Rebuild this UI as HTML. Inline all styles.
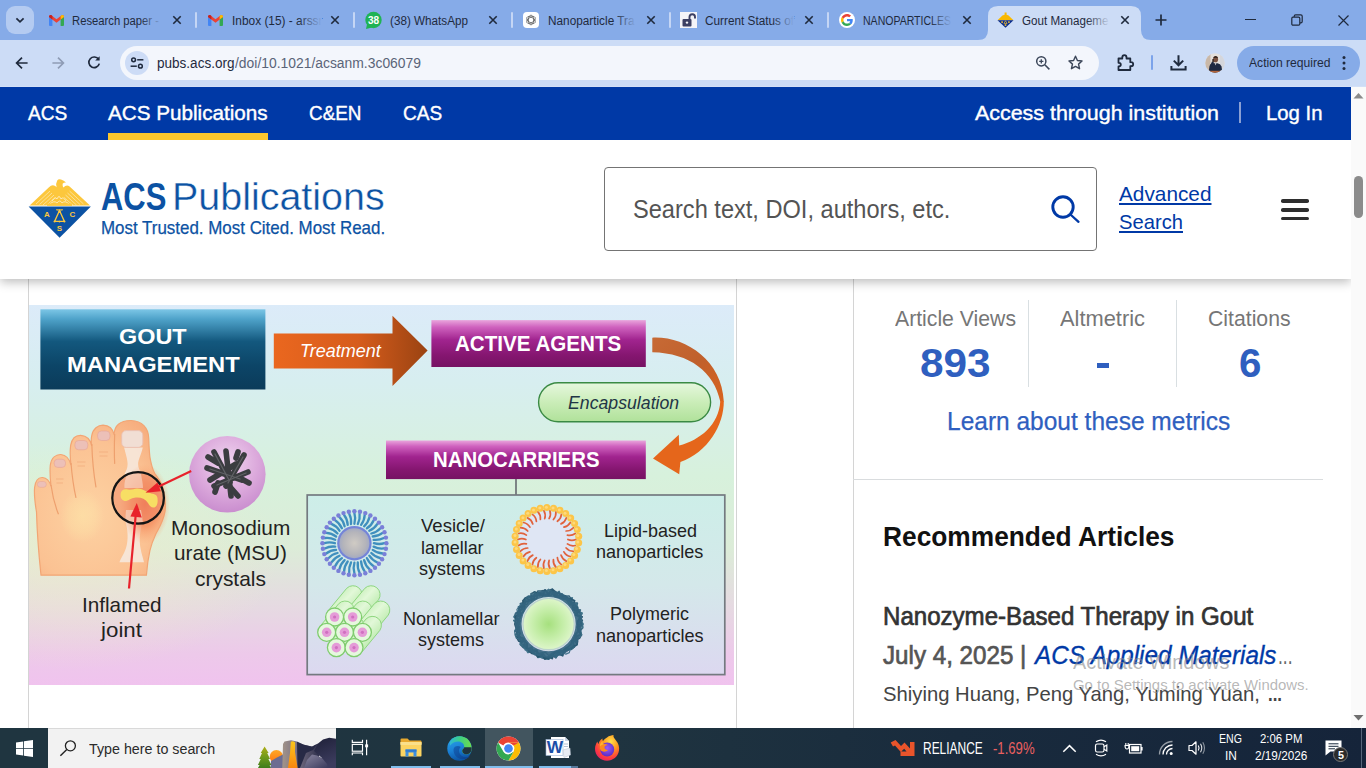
<!DOCTYPE html>
<html><head><meta charset="utf-8"><title>Gout Management</title>
<style>
html,body{margin:0;padding:0;}
body{width:1366px;height:768px;overflow:hidden;position:relative;background:#fff;font-family:"Liberation Sans",sans-serif;}
.t{position:absolute;white-space:nowrap;transform-origin:0 0;line-height:normal;}
.a{position:absolute;}
svg{position:absolute;overflow:visible;}
</style></head><body>
<div class="a" style="left:0;top:0;width:1366px;height:40px;background:#86abe8"></div><div class="a" style="left:0;top:40px;width:1366px;height:47px;background:#ccdcf6"></div><svg style="left:0;top:0" width="1366" height="41"><path d="M978 40 Q988 40 988 30 L988 16 Q988 6 998 6 L1131 6 Q1141 6 1141 16 L1141 30 Q1141 40 1151 40 Z" fill="#ccdcf6"/></svg><div class="a" style="left:6px;top:6px;width:28px;height:28px;border-radius:9px;background:#b4cbf1"></div><svg style="left:13px;top:13px" width="14" height="14" viewBox="0 0 14 14"><path d="M3.4 5.3 L7 8.9 L10.6 5.3" fill="none" stroke="#1f2a3d" stroke-width="1.7"/></svg><svg style="left:49px;top:15px" width="15" height="11" viewBox="0 0 15 11">
<path d="M0 1.6 L0 10 Q0 11 1 11 L3.4 11 L3.4 4.6 Z" fill="#4285f4"/>
<path d="M15 1.6 L15 10 Q15 11 14 11 L11.6 11 L11.6 4.6 Z" fill="#34a853"/>
<path d="M0 1.6 Q0 0 1.6 0 L2 0 L7.5 4.2 L13 0 L13.4 0 Q15 0 15 1.6 L15 2 L7.5 7.8 L0 2 Z" fill="#ea4335"/>
<path d="M0 1.5 Q0 0 1.5 0 L2.2 0 L3.4 1 L3.4 4.6 L0 2Z" fill="#c5221f"/>
<path d="M15 1.5 Q15 0 13.5 0 L12.8 0 L11.6 1 L11.6 4.6 L15 2Z" fill="#fbbc04"/>
</svg><span class="t" style="left:72.00px;top:13.95px;font-size:12px;color:#1f2a3d;transform:scaleX(0.9384);">Research paper -</span>
<div class="a" style="left:140px;top:10px;width:22px;height:20px;background:linear-gradient(90deg,rgba(134,171,232,0),rgba(134,171,232,1))"></div><svg style="left:172px;top:15px" width="10" height="10" viewBox="0 0 10 10"><path d="M1.3 1.3 L8.7 8.7 M8.7 1.3 L1.3 8.7" stroke="#1f2a3d" stroke-width="1.6" fill="none"/></svg><div class="a" style="left:195px;top:12px;width:2px;height:16px;background:#c5d6f5;border-radius:1px"></div><svg style="left:208px;top:15px" width="15" height="11" viewBox="0 0 15 11">
<path d="M0 1.6 L0 10 Q0 11 1 11 L3.4 11 L3.4 4.6 Z" fill="#4285f4"/>
<path d="M15 1.6 L15 10 Q15 11 14 11 L11.6 11 L11.6 4.6 Z" fill="#34a853"/>
<path d="M0 1.6 Q0 0 1.6 0 L2 0 L7.5 4.2 L13 0 L13.4 0 Q15 0 15 1.6 L15 2 L7.5 7.8 L0 2 Z" fill="#ea4335"/>
<path d="M0 1.5 Q0 0 1.5 0 L2.2 0 L3.4 1 L3.4 4.6 L0 2Z" fill="#c5221f"/>
<path d="M15 1.5 Q15 0 13.5 0 L12.8 0 L11.6 1 L11.6 4.6 L15 2Z" fill="#fbbc04"/>
</svg><span class="t" style="left:231.50px;top:13.95px;font-size:12px;color:#1f2a3d;transform:scaleX(0.9906);">Inbox (15) - arssr</span>
<div class="a" style="left:298px;top:10px;width:24px;height:20px;background:linear-gradient(90deg,rgba(134,171,232,0),rgba(134,171,232,1))"></div><svg style="left:330px;top:15px" width="10" height="10" viewBox="0 0 10 10"><path d="M1.3 1.3 L8.7 8.7 M8.7 1.3 L1.3 8.7" stroke="#1f2a3d" stroke-width="1.6" fill="none"/></svg><div class="a" style="left:353px;top:12px;width:2px;height:16px;background:#c5d6f5;border-radius:1px"></div><svg style="left:364px;top:11px" width="19" height="19" viewBox="0 0 19 19"><circle cx="9.5" cy="9" r="8.2" fill="#1fb355"/><path d="M2 18 L3.2 12.5 L8 16.5 Z" fill="#1fb355"/><text x="9.5" y="12.6" font-family="Liberation Sans" font-size="10" font-weight="bold" fill="#fff" text-anchor="middle">38</text></svg><span class="t" style="left:389.50px;top:13.95px;font-size:12px;color:#1f2a3d;transform:scaleX(0.9746);">(38) WhatsApp</span>
<svg style="left:488px;top:15px" width="10" height="10" viewBox="0 0 10 10"><path d="M1.3 1.3 L8.7 8.7 M8.7 1.3 L1.3 8.7" stroke="#1f2a3d" stroke-width="1.6" fill="none"/></svg><div class="a" style="left:511px;top:12px;width:2px;height:16px;background:#c5d6f5;border-radius:1px"></div><div class="a" style="left:523px;top:12px;width:16px;height:16px;border-radius:4px;background:#fff"></div><svg style="left:525px;top:14px" width="12" height="12" viewBox="0 0 12 12"><g fill="none" stroke="#555" stroke-width="0.7"><ellipse cx="6" cy="6" rx="2.6" ry="4.8"/><ellipse cx="6" cy="6" rx="2.6" ry="4.8" transform="rotate(60 6 6)"/><ellipse cx="6" cy="6" rx="2.6" ry="4.8" transform="rotate(120 6 6)"/></g></svg><span class="t" style="left:547.50px;top:13.95px;font-size:12px;color:#1f2a3d;transform:scaleX(0.9825);">Nanoparticle Tra</span>
<div class="a" style="left:614px;top:10px;width:22px;height:20px;background:linear-gradient(90deg,rgba(134,171,232,0),rgba(134,171,232,1))"></div><svg style="left:646px;top:15px" width="10" height="10" viewBox="0 0 10 10"><path d="M1.3 1.3 L8.7 8.7 M8.7 1.3 L1.3 8.7" stroke="#1f2a3d" stroke-width="1.6" fill="none"/></svg><div class="a" style="left:669px;top:12px;width:2px;height:16px;background:#c5d6f5;border-radius:1px"></div><div class="a" style="left:680px;top:12px;width:17px;height:16px;background:#f4f4f8"></div><svg style="left:681px;top:13px" width="16" height="14" viewBox="0 0 16 14"><rect x="1.5" y="6" width="9" height="7.5" rx="1" fill="#3c3f63"/><path d="M8.5 6 L8.5 4 Q8.5 1.2 11.3 1.2 Q14 1.2 14 4 L14 5.6" fill="none" stroke="#3c3f63" stroke-width="1.9"/><circle cx="6" cy="9.6" r="1.2" fill="#f4f4f8"/></svg><span class="t" style="left:705.00px;top:13.95px;font-size:12px;color:#1f2a3d;transform:scaleX(0.9812);">Current Status of</span>
<div class="a" style="left:772px;top:10px;width:22px;height:20px;background:linear-gradient(90deg,rgba(134,171,232,0),rgba(134,171,232,1))"></div><svg style="left:804px;top:15px" width="10" height="10" viewBox="0 0 10 10"><path d="M1.3 1.3 L8.7 8.7 M8.7 1.3 L1.3 8.7" stroke="#1f2a3d" stroke-width="1.6" fill="none"/></svg><div class="a" style="left:827px;top:12px;width:2px;height:16px;background:#c5d6f5;border-radius:1px"></div><div class="a" style="left:839px;top:12px;width:16px;height:16px;border-radius:8px;background:#fff"></div><svg style="left:841px;top:14px" width="12" height="12" viewBox="0 0 48 48"><path fill="#EA4335" d="M24 9.5c3.54 0 6.71 1.22 9.21 3.6l6.85-6.85C35.9 2.38 30.47 0 24 0 14.62 0 6.51 5.38 2.56 13.22l7.98 6.19C12.43 13.72 17.74 9.5 24 9.5z"/><path fill="#4285F4" d="M46.98 24.55c0-1.57-.15-3.09-.38-4.55H24v9.02h12.94c-.58 2.96-2.26 5.48-4.78 7.18l7.73 6c4.51-4.18 7.09-10.36 7.09-17.65z"/><path fill="#FBBC05" d="M10.53 28.59c-.48-1.45-.76-2.99-.76-4.59s.27-3.14.76-4.59l-7.98-6.19C.92 16.46 0 20.12 0 24c0 3.88.92 7.54 2.56 10.78l7.97-6.19z"/><path fill="#34A853" d="M24 48c6.48 0 11.93-2.13 15.89-5.81l-7.73-6c-2.15 1.45-4.92 2.3-8.16 2.3-6.26 0-11.57-4.22-13.47-9.91l-7.98 6.19C6.51 42.62 14.62 48 24 48z"/></svg><span class="t" style="left:863.00px;top:13.95px;font-size:12px;color:#1f2a3d;transform:scaleX(0.8778);">NANOPARTICLES</span>
<div class="a" style="left:930px;top:10px;width:22px;height:20px;background:linear-gradient(90deg,rgba(134,171,232,0),rgba(134,171,232,1))"></div><svg style="left:962px;top:15px" width="10" height="10" viewBox="0 0 10 10"><path d="M1.3 1.3 L8.7 8.7 M8.7 1.3 L1.3 8.7" stroke="#1f2a3d" stroke-width="1.6" fill="none"/></svg><svg style="left:997px;top:12px" width="17" height="16" viewBox="0 0 17 16"><path d="M0.5 8.2 L3.4 5.4 Q5.4 3.2 7.6 2.8 L7.6 0.6 L9.6 0.6 L9.6 2.800 Q11.600 3.200 13.600 5.400 L16.500 8.200 Z" fill="#f9b800"/><path d="M0.500 8.200 L16.500 8.200 L8.500 15.800 Z" fill="#0a2d8c"/><g fill="#f4c030"><rect x="4.300" y="9.300" width="1.600" height="1.600"/><rect x="11.100" y="9.300" width="1.600" height="1.600"/><rect x="7.700" y="12.300" width="1.600" height="1.600"/></g><path d="M8.500 8.800 L6.900 11.600 L10.100 11.600 Z" fill="none" stroke="#f4c030" stroke-width="0.700"/></svg><span class="t" style="left:1021.50px;top:13.95px;font-size:12px;color:#1f2a3d;transform:scaleX(0.9677);">Gout Manageme</span>
<div class="a" style="left:1086px;top:10px;width:24px;height:20px;background:linear-gradient(90deg,rgba(204,220,246,0),rgba(204,220,246,1))"></div><svg style="left:1120px;top:15px" width="10" height="10" viewBox="0 0 10 10"><path d="M1.3 1.3 L8.7 8.7 M8.7 1.3 L1.3 8.7" stroke="#1f2a3d" stroke-width="1.6" fill="none"/></svg><svg style="left:1154px;top:13px" width="14" height="14" viewBox="0 0 14 14"><path d="M7 1.5 V12.5 M1.5 7 H12.5" stroke="#1f2a3d" stroke-width="1.7"/></svg><div class="a" style="left:1245px;top:19px;width:11px;height:1.3px;background:#1f2a3d"></div><svg style="left:1291px;top:14px" width="12" height="12" viewBox="0 0 12 12"><rect x="0.8" y="3.2" width="8" height="8" rx="1.2" fill="none" stroke="#1f2a3d" stroke-width="1.2"/><path d="M3.2 3 V2.2 Q3.2 0.8 4.6 0.8 H9.8 Q11.2 0.8 11.2 2.2 V7.4 Q11.2 8.8 9.8 8.8 H9" fill="none" stroke="#1f2a3d" stroke-width="1.2"/></svg><svg style="left:1338px;top:14.5px" width="11" height="11" viewBox="0 0 11 11"><path d="M0.5 0.5 L10.5 10.5 M10.5 0.5 L0.5 10.5" stroke="#1f2a3d" stroke-width="1.2"/></svg><svg style="left:15px;top:56px" width="14" height="14" viewBox="0 0 14 14"><path d="M12.6 7 H2 M7 1.6 L1.6 7 L7 12.4" fill="none" stroke="#1f2a3d" stroke-width="1.7"/></svg><svg style="left:51px;top:56px" width="14" height="14" viewBox="0 0 14 14"><path d="M1.4 7 H12 M7 1.6 L12.4 7 L7 12.4" fill="none" stroke="#8f9cb5" stroke-width="1.7"/></svg><svg style="left:87px;top:55px" width="14" height="15" viewBox="0 0 14 15"><path d="M11.6 4.4 A5.3 5.3 0 1 0 12.3 8.6" fill="none" stroke="#1f2a3d" stroke-width="1.7"/><path d="M12.6 1.2 V5.6 H8.2 Z" fill="#1f2a3d"/></svg><div class="a" style="left:120px;top:46px;width:979px;height:34px;border-radius:17px;background:#f3f6fc"></div><div class="a" style="left:125px;top:51px;width:24px;height:24px;border-radius:12px;background:#cddcf6"></div><svg style="left:130px;top:56px" width="14" height="14" viewBox="0 0 14 14"><g fill="none" stroke="#1f2a3d" stroke-width="1.5"><circle cx="3.6" cy="3.8" r="1.9"/><path d="M7.2 3.8 H13.4"/><circle cx="10.4" cy="10.2" r="1.9"/><path d="M0.6 10.2 H6.8"/></g></svg><span class="t" style="left:157.00px;top:54.61px;font-size:14px;color:#1f2a3d;transform:scaleX(0.9668);">pubs.acs.org</span>
<span class="t" style="left:234.50px;top:54.61px;font-size:14px;color:#5a6478;transform:scaleX(0.9915);">/doi/10.1021/acsanm.3c06079</span>
<svg style="left:1035px;top:55px" width="16" height="16" viewBox="0 0 16 16"><g fill="none" stroke="#3b4659" stroke-width="1.5"><circle cx="6.3" cy="6.3" r="4.6"/><path d="M9.8 9.8 L14.4 14.4"/><path d="M4.2 6.3 H8.4 M6.3 4.2 V8.4" stroke-width="1.3"/></g></svg><svg style="left:1067px;top:54px" width="17" height="17" viewBox="0 0 24 24"><path d="M12 3.2 L14.7 9.2 L21.2 9.9 L16.3 14.3 L17.7 20.8 L12 17.5 L6.3 20.8 L7.7 14.3 L2.8 9.9 L9.3 9.2 Z" fill="none" stroke="#3b4659" stroke-width="2" stroke-linejoin="round"/></svg><svg style="left:1116px;top:53px" width="19" height="19" viewBox="0 0 19 19"><path d="M2.5 5.5 H6.3 V4.6 Q6.3 2.2 8.4 2.2 Q10.5 2.2 10.5 4.6 V5.5 H14.3 V9.2 H15 Q17.2 9.2 17.2 11.2 Q17.2 13.2 15 13.2 H14.3 V17 H2.5 V13.4 H3 Q4.8 13.4 4.8 11.6 Q4.8 9.8 3 9.8 H2.5 Z" fill="none" stroke="#1f2a3d" stroke-width="1.8" stroke-linejoin="round"/></svg><div class="a" style="left:1151px;top:55px;width:2px;height:15px;background:#7ba3ea;border-radius:1px"></div><svg style="left:1170px;top:54px" width="17" height="17" viewBox="0 0 17 17"><path d="M8.5 1.2 V11 M3.8 6.6 L8.5 11.3 L13.2 6.6 M1.4 12 V15.6 H15.6 V12" fill="none" stroke="#1f2a3d" stroke-width="2"/></svg><svg style="left:1205px;top:53px" width="20" height="20" viewBox="0 0 20 20"><defs><clipPath id="avc"><circle cx="10" cy="10" r="9.700"/></clipPath></defs><g clip-path="url(#avc)"><rect width="20" height="20" fill="#e4e0dc"/><rect x="0" y="0" width="5.500" height="20" fill="#c9b8a8"/><rect x="15" y="0" width="5" height="20" fill="#d4d6dc"/>
<path d="M3.500 20 L4.500 13 Q5 10.500 8 10.200 L12.500 10.200 Q15.500 10.500 16.500 13.500 L17.500 20 Z" fill="#1f2a42"/>
<path d="M5 13 L7 8.500 L9 9.500 L7.500 14 Z" fill="#1f2a42"/>
<ellipse cx="10.600" cy="6.200" rx="2.500" ry="3.100" fill="#7a5240"/><path d="M8 5.200 Q10.600 1.300 13.200 5.200 Q10.600 3.600 8 5.200Z" fill="#17120f"/><rect x="7.300" y="6" width="1.600" height="3" rx="0.500" fill="#3a2a24"/>
<path d="M9.800 10.200 L10.600 12.500 L11.400 10.200Z" fill="#e8e4e0"/><rect x="2" y="17.800" width="16" height="3" fill="#b5673e"/></g></svg><div class="a" style="left:1237px;top:46px;width:123px;height:34px;border-radius:17px;background:#86abe8"></div><span class="t" style="left:1249.00px;top:55.03px;font-size:13px;color:#1f2a3d;transform:scaleX(0.9321);">Action required</span>
<svg style="left:1342px;top:55px" width="4" height="16" viewBox="0 0 4 16"><circle cx="2" cy="2.5" r="1.5" fill="#1f2a3d"/><circle cx="2" cy="8" r="1.5" fill="#1f2a3d"/><circle cx="2" cy="13.5" r="1.5" fill="#1f2a3d"/></svg><div class="a" style="left:0;top:87px;width:1351px;height:641px;background:#fff"></div><div class="a" style="left:28px;top:278px;width:1px;height:450px;background:#d4d4d4"></div><div class="a" style="left:736px;top:278px;width:1px;height:450px;background:#d4d4d4"></div><div class="a" style="left:853px;top:278px;width:1px;height:450px;background:#d4d4d4"></div><svg style="left:0;top:0" width="760" height="700" viewBox="0 0 760 700"><defs>
<linearGradient id="fbg" x1="0" y1="0" x2="0" y2="1"><stop offset="0" stop-color="#dcebf9"/><stop offset="0.2" stop-color="#d7eef0"/><stop offset="0.45" stop-color="#d7f1dc"/><stop offset="0.64" stop-color="#dcecd8"/><stop offset="0.8" stop-color="#e6d9e2"/><stop offset="0.92" stop-color="#edc9ea"/><stop offset="1" stop-color="#f0c3ee"/></linearGradient>
<radialGradient id="fyl" cx="0.06" cy="0.66" r="0.3"><stop offset="0" stop-color="#f2ecc8" stop-opacity="0.55"/><stop offset="1" stop-color="#f4efc6" stop-opacity="0"/></radialGradient>
<linearGradient id="gbox" x1="0" y1="0" x2="0" y2="1"><stop offset="0" stop-color="#7cc6e6"/><stop offset="0.12" stop-color="#4fa3ca"/><stop offset="0.4" stop-color="#13587e"/><stop offset="0.7" stop-color="#0c4567"/><stop offset="1" stop-color="#0b3b5a"/></linearGradient>
<linearGradient id="pbox" x1="0" y1="0" x2="0" y2="1"><stop offset="0" stop-color="#e9a4dc"/><stop offset="0.15" stop-color="#cf62be"/><stop offset="0.42" stop-color="#a1248f"/><stop offset="0.75" stop-color="#851670"/><stop offset="1" stop-color="#761263"/></linearGradient>
<linearGradient id="oarr" x1="0" y1="0" x2="1" y2="0"><stop offset="0" stop-color="#ea671f"/><stop offset="0.55" stop-color="#d65c1c"/><stop offset="1" stop-color="#9a4312"/></linearGradient>
<linearGradient id="carr1" x1="0" y1="0" x2="1" y2="1"><stop offset="0" stop-color="#c76a35"/><stop offset="0.5" stop-color="#c0602c"/><stop offset="1" stop-color="#d8631f"/></linearGradient>
<linearGradient id="enc" x1="0" y1="0" x2="0" y2="1"><stop offset="0" stop-color="#e6f7de"/><stop offset="0.5" stop-color="#caedb8"/><stop offset="1" stop-color="#b0e19a"/></linearGradient>
<linearGradient id="nbox" x1="0" y1="0" x2="0" y2="1"><stop offset="0" stop-color="#cdeee8"/><stop offset="0.5" stop-color="#d4e8ea"/><stop offset="1" stop-color="#dcd8f0"/></linearGradient>
<radialGradient id="pcir" cx="0.5" cy="0.35" r="0.7"><stop offset="0" stop-color="#f0d6f0"/><stop offset="0.55" stop-color="#dcaadc"/><stop offset="1" stop-color="#c688cc"/></radialGradient>
<radialGradient id="core" cx="0.5" cy="0.5" r="0.5"><stop offset="0" stop-color="#d0cbc4"/><stop offset="0.75" stop-color="#b4b4ba"/><stop offset="1" stop-color="#a4aac2"/></radialGradient>
<radialGradient id="pgr" cx="0.5" cy="0.5" r="0.5"><stop offset="0" stop-color="#a6e07e"/><stop offset="0.6" stop-color="#c6eeaa"/><stop offset="1" stop-color="#dcf5c8"/></radialGradient>
<linearGradient id="cyl" x1="0" y1="0" x2="1" y2="1"><stop offset="0" stop-color="#a8e596"/><stop offset="0.45" stop-color="#e2f8d8"/><stop offset="1" stop-color="#9adf88"/></linearGradient>
<radialGradient id="skin" cx="0.42" cy="0.6" r="0.72"><stop offset="0" stop-color="#fdd2a2"/><stop offset="0.65" stop-color="#fbc293"/><stop offset="1" stop-color="#f6ab7c"/></radialGradient>
<radialGradient id="infl" cx="0.5" cy="0.5" r="0.5"><stop offset="0" stop-color="#ee6a48" stop-opacity="0.95"/><stop offset="0.55" stop-color="#f48a5c" stop-opacity="0.75"/><stop offset="1" stop-color="#f9a574" stop-opacity="0"/></radialGradient>
<radialGradient id="ytx" cx="0.5" cy="0.5" r="0.5"><stop offset="0" stop-color="#fde6a8" stop-opacity="0.55"/><stop offset="0.6" stop-color="#fde6a8" stop-opacity="0.3"/><stop offset="1" stop-color="#fde6a8" stop-opacity="0"/></radialGradient><clipPath id="figclip"><rect x="29" y="305" width="705" height="380"/></clipPath>
</defs><rect x="29" y="305" width="705" height="380" fill="url(#fbg)"/><rect x="29" y="305" width="705" height="380" fill="url(#fyl)"/><rect x="40.4" y="309.3" width="225" height="80.2" fill="url(#gbox)"/><path d="M273.8 333.6 L392.5 333.6 L392.5 315.7 L427.6 350.5 L392.5 386 L392.5 368.4 L273.8 368.4 Z" fill="url(#oarr)"/><rect x="431.4" y="320.1" width="214.4" height="46.9" fill="url(#pbox)"/><rect x="386" y="440.5" width="259.8" height="38.6" fill="url(#pbox)"/><path d="M652.3 337.7 C685 336 722 360 723.8 401.5 L720.3 401.5 C714 372 690 353 652.3 352.2 Z" fill="url(#carr1)"/><path d="M723.8 401 C724 425 708 452 680.4 462 L679.2 474.2 L653 458.5 L678.8 434.8 L679.2 445.6 C700 440 719 425 720.3 401 Z" fill="#e5661b"/><rect x="538.6" y="382.8" width="172" height="39" rx="19.5" fill="url(#enc)" stroke="#3a8a44" stroke-width="1.4"/><path d="M516 479 V495" stroke="#666a70" stroke-width="1.6"/><rect x="307.2" y="495" width="417.6" height="179.6" fill="url(#nbox)" stroke="#747a80" stroke-width="1.7"/><path d="M373.9 543.2 Q379.4 544.8 384.4 543.2" stroke="#3f8fbe" stroke-width="2.3" fill="none" stroke-linecap="round"/><path d="M373.6 546.6 Q378.7 549.1 383.9 548.4" stroke="#3f8fbe" stroke-width="2.3" fill="none" stroke-linecap="round"/><path d="M372.7 549.9 Q377.3 553.3 382.6 553.5" stroke="#3f8fbe" stroke-width="2.3" fill="none" stroke-linecap="round"/><path d="M371.3 553.0 Q375.3 557.1 380.4 558.2" stroke="#3f8fbe" stroke-width="2.3" fill="none" stroke-linecap="round"/><path d="M369.3 555.7 Q372.5 560.5 377.4 562.5" stroke="#3f8fbe" stroke-width="2.3" fill="none" stroke-linecap="round"/><path d="M366.9 558.1 Q369.2 563.4 373.7 566.2" stroke="#3f8fbe" stroke-width="2.3" fill="none" stroke-linecap="round"/><path d="M364.1 560.1 Q365.5 565.7 369.4 569.2" stroke="#3f8fbe" stroke-width="2.3" fill="none" stroke-linecap="round"/><path d="M361.1 561.5 Q361.4 567.2 364.7 571.4" stroke="#3f8fbe" stroke-width="2.3" fill="none" stroke-linecap="round"/><path d="M357.8 562.4 Q357.2 568.1 359.6 572.7" stroke="#3f8fbe" stroke-width="2.3" fill="none" stroke-linecap="round"/><path d="M354.4 562.7 Q352.8 568.2 354.4 573.2" stroke="#3f8fbe" stroke-width="2.3" fill="none" stroke-linecap="round"/><path d="M351.0 562.4 Q348.5 567.5 349.2 572.7" stroke="#3f8fbe" stroke-width="2.3" fill="none" stroke-linecap="round"/><path d="M347.7 561.5 Q344.3 566.1 344.1 571.4" stroke="#3f8fbe" stroke-width="2.3" fill="none" stroke-linecap="round"/><path d="M344.6 560.1 Q340.5 564.1 339.4 569.2" stroke="#3f8fbe" stroke-width="2.3" fill="none" stroke-linecap="round"/><path d="M341.9 558.1 Q337.1 561.3 335.1 566.2" stroke="#3f8fbe" stroke-width="2.3" fill="none" stroke-linecap="round"/><path d="M339.5 555.7 Q334.2 558.0 331.4 562.5" stroke="#3f8fbe" stroke-width="2.3" fill="none" stroke-linecap="round"/><path d="M337.5 553.0 Q331.9 554.3 328.4 558.2" stroke="#3f8fbe" stroke-width="2.3" fill="none" stroke-linecap="round"/><path d="M336.1 549.9 Q330.4 550.2 326.2 553.5" stroke="#3f8fbe" stroke-width="2.3" fill="none" stroke-linecap="round"/><path d="M335.2 546.6 Q329.5 546.0 324.9 548.4" stroke="#3f8fbe" stroke-width="2.3" fill="none" stroke-linecap="round"/><path d="M334.9 543.2 Q329.4 541.6 324.4 543.2" stroke="#3f8fbe" stroke-width="2.3" fill="none" stroke-linecap="round"/><path d="M335.2 539.8 Q330.1 537.3 324.9 538.0" stroke="#3f8fbe" stroke-width="2.3" fill="none" stroke-linecap="round"/><path d="M336.1 536.5 Q331.5 533.1 326.2 532.9" stroke="#3f8fbe" stroke-width="2.3" fill="none" stroke-linecap="round"/><path d="M337.5 533.5 Q333.5 529.3 328.4 528.2" stroke="#3f8fbe" stroke-width="2.3" fill="none" stroke-linecap="round"/><path d="M339.5 530.7 Q336.3 525.9 331.4 523.9" stroke="#3f8fbe" stroke-width="2.3" fill="none" stroke-linecap="round"/><path d="M341.9 528.3 Q339.6 523.0 335.1 520.2" stroke="#3f8fbe" stroke-width="2.3" fill="none" stroke-linecap="round"/><path d="M344.6 526.3 Q343.3 520.7 339.4 517.2" stroke="#3f8fbe" stroke-width="2.3" fill="none" stroke-linecap="round"/><path d="M347.7 524.9 Q347.4 519.2 344.1 515.0" stroke="#3f8fbe" stroke-width="2.3" fill="none" stroke-linecap="round"/><path d="M351.0 524.0 Q351.6 518.3 349.2 513.7" stroke="#3f8fbe" stroke-width="2.3" fill="none" stroke-linecap="round"/><path d="M354.4 523.7 Q356.0 518.2 354.4 513.2" stroke="#3f8fbe" stroke-width="2.3" fill="none" stroke-linecap="round"/><path d="M357.8 524.0 Q360.3 518.9 359.6 513.7" stroke="#3f8fbe" stroke-width="2.3" fill="none" stroke-linecap="round"/><path d="M361.1 524.9 Q364.5 520.3 364.7 515.0" stroke="#3f8fbe" stroke-width="2.3" fill="none" stroke-linecap="round"/><path d="M364.1 526.3 Q368.3 522.3 369.4 517.2" stroke="#3f8fbe" stroke-width="2.3" fill="none" stroke-linecap="round"/><path d="M366.9 528.3 Q371.7 525.1 373.7 520.2" stroke="#3f8fbe" stroke-width="2.3" fill="none" stroke-linecap="round"/><path d="M369.3 530.7 Q374.6 528.4 377.4 523.9" stroke="#3f8fbe" stroke-width="2.3" fill="none" stroke-linecap="round"/><path d="M371.3 533.5 Q376.9 532.1 380.4 528.2" stroke="#3f8fbe" stroke-width="2.3" fill="none" stroke-linecap="round"/><path d="M372.7 536.5 Q378.4 536.2 382.6 532.9" stroke="#3f8fbe" stroke-width="2.3" fill="none" stroke-linecap="round"/><path d="M373.6 539.8 Q379.3 540.4 383.9 538.0" stroke="#3f8fbe" stroke-width="2.3" fill="none" stroke-linecap="round"/><circle cx="386.4" cy="543.2" r="2.2" fill="#7a7fd8"/><circle cx="385.9" cy="548.8" r="2.2" fill="#7a7fd8"/><circle cx="384.5" cy="554.1" r="2.2" fill="#7a7fd8"/><circle cx="382.1" cy="559.2" r="2.2" fill="#7a7fd8"/><circle cx="378.9" cy="563.8" r="2.2" fill="#7a7fd8"/><circle cx="375.0" cy="567.7" r="2.2" fill="#7a7fd8"/><circle cx="370.4" cy="570.9" r="2.2" fill="#7a7fd8"/><circle cx="365.3" cy="573.3" r="2.2" fill="#7a7fd8"/><circle cx="360.0" cy="574.7" r="2.2" fill="#7a7fd8"/><circle cx="354.4" cy="575.2" r="2.2" fill="#7a7fd8"/><circle cx="348.8" cy="574.7" r="2.2" fill="#7a7fd8"/><circle cx="343.5" cy="573.3" r="2.2" fill="#7a7fd8"/><circle cx="338.4" cy="570.9" r="2.2" fill="#7a7fd8"/><circle cx="333.8" cy="567.7" r="2.2" fill="#7a7fd8"/><circle cx="329.9" cy="563.8" r="2.2" fill="#7a7fd8"/><circle cx="326.7" cy="559.2" r="2.2" fill="#7a7fd8"/><circle cx="324.3" cy="554.1" r="2.2" fill="#7a7fd8"/><circle cx="322.9" cy="548.8" r="2.2" fill="#7a7fd8"/><circle cx="322.4" cy="543.2" r="2.2" fill="#7a7fd8"/><circle cx="322.9" cy="537.6" r="2.2" fill="#7a7fd8"/><circle cx="324.3" cy="532.3" r="2.2" fill="#7a7fd8"/><circle cx="326.7" cy="527.2" r="2.2" fill="#7a7fd8"/><circle cx="329.9" cy="522.6" r="2.2" fill="#7a7fd8"/><circle cx="333.8" cy="518.7" r="2.2" fill="#7a7fd8"/><circle cx="338.4" cy="515.5" r="2.2" fill="#7a7fd8"/><circle cx="343.5" cy="513.1" r="2.2" fill="#7a7fd8"/><circle cx="348.8" cy="511.7" r="2.2" fill="#7a7fd8"/><circle cx="354.4" cy="511.2" r="2.2" fill="#7a7fd8"/><circle cx="360.0" cy="511.7" r="2.2" fill="#7a7fd8"/><circle cx="365.3" cy="513.1" r="2.2" fill="#7a7fd8"/><circle cx="370.4" cy="515.5" r="2.2" fill="#7a7fd8"/><circle cx="375.0" cy="518.7" r="2.2" fill="#7a7fd8"/><circle cx="378.9" cy="522.6" r="2.2" fill="#7a7fd8"/><circle cx="382.1" cy="527.2" r="2.2" fill="#7a7fd8"/><circle cx="384.5" cy="532.3" r="2.2" fill="#7a7fd8"/><circle cx="385.9" cy="537.6" r="2.2" fill="#7a7fd8"/><circle cx="354.4" cy="543.2" r="17.2" fill="#7484d8"/><circle cx="354.4" cy="543.2" r="15" fill="url(#core)"/><circle cx="546.9" cy="539.5" r="28" fill="#dfe6f4"/><path d="M567.9 539.5 Q571.9 541.3 575.9 539.5" stroke="#e0623c" stroke-width="1.7" fill="none" stroke-linecap="round"/><path d="M567.4 543.9 Q571.0 546.5 575.3 545.5" stroke="#e0623c" stroke-width="1.7" fill="none" stroke-linecap="round"/><path d="M566.1 548.0 Q569.0 551.3 573.4 551.3" stroke="#e0623c" stroke-width="1.7" fill="none" stroke-linecap="round"/><path d="M563.9 551.8 Q566.1 555.7 570.4 556.5" stroke="#e0623c" stroke-width="1.7" fill="none" stroke-linecap="round"/><path d="M561.0 555.1 Q562.3 559.3 566.3 561.1" stroke="#e0623c" stroke-width="1.7" fill="none" stroke-linecap="round"/><path d="M557.4 557.7 Q557.8 562.1 561.4 564.6" stroke="#e0623c" stroke-width="1.7" fill="none" stroke-linecap="round"/><path d="M553.4 559.5 Q552.9 563.8 555.9 567.1" stroke="#e0623c" stroke-width="1.7" fill="none" stroke-linecap="round"/><path d="M549.1 560.4 Q547.7 564.6 549.9 568.3" stroke="#e0623c" stroke-width="1.7" fill="none" stroke-linecap="round"/><path d="M544.7 560.4 Q542.5 564.2 543.9 568.3" stroke="#e0623c" stroke-width="1.7" fill="none" stroke-linecap="round"/><path d="M540.4 559.5 Q537.5 562.7 537.9 567.1" stroke="#e0623c" stroke-width="1.7" fill="none" stroke-linecap="round"/><path d="M536.4 557.7 Q532.8 560.3 532.4 564.6" stroke="#e0623c" stroke-width="1.7" fill="none" stroke-linecap="round"/><path d="M532.8 555.1 Q528.8 556.9 527.5 561.1" stroke="#e0623c" stroke-width="1.7" fill="none" stroke-linecap="round"/><path d="M529.9 551.8 Q525.6 552.7 523.4 556.5" stroke="#e0623c" stroke-width="1.7" fill="none" stroke-linecap="round"/><path d="M527.7 548.0 Q523.3 548.0 520.4 551.3" stroke="#e0623c" stroke-width="1.7" fill="none" stroke-linecap="round"/><path d="M526.4 543.9 Q522.1 542.9 518.5 545.5" stroke="#e0623c" stroke-width="1.7" fill="none" stroke-linecap="round"/><path d="M525.9 539.5 Q521.9 537.7 517.9 539.5" stroke="#e0623c" stroke-width="1.7" fill="none" stroke-linecap="round"/><path d="M526.4 535.1 Q522.8 532.5 518.5 533.5" stroke="#e0623c" stroke-width="1.7" fill="none" stroke-linecap="round"/><path d="M527.7 531.0 Q524.8 527.7 520.4 527.7" stroke="#e0623c" stroke-width="1.7" fill="none" stroke-linecap="round"/><path d="M529.9 527.2 Q527.7 523.3 523.4 522.5" stroke="#e0623c" stroke-width="1.7" fill="none" stroke-linecap="round"/><path d="M532.8 523.9 Q531.5 519.7 527.5 517.9" stroke="#e0623c" stroke-width="1.7" fill="none" stroke-linecap="round"/><path d="M536.4 521.3 Q536.0 516.9 532.4 514.4" stroke="#e0623c" stroke-width="1.7" fill="none" stroke-linecap="round"/><path d="M540.4 519.5 Q540.9 515.2 537.9 511.9" stroke="#e0623c" stroke-width="1.7" fill="none" stroke-linecap="round"/><path d="M544.7 518.6 Q546.1 514.4 543.9 510.7" stroke="#e0623c" stroke-width="1.7" fill="none" stroke-linecap="round"/><path d="M549.1 518.6 Q551.3 514.8 549.9 510.7" stroke="#e0623c" stroke-width="1.7" fill="none" stroke-linecap="round"/><path d="M553.4 519.5 Q556.3 516.3 555.9 511.9" stroke="#e0623c" stroke-width="1.7" fill="none" stroke-linecap="round"/><path d="M557.4 521.3 Q561.0 518.7 561.4 514.4" stroke="#e0623c" stroke-width="1.7" fill="none" stroke-linecap="round"/><path d="M561.0 523.9 Q565.0 522.1 566.3 517.9" stroke="#e0623c" stroke-width="1.7" fill="none" stroke-linecap="round"/><path d="M563.9 527.2 Q568.2 526.3 570.4 522.5" stroke="#e0623c" stroke-width="1.7" fill="none" stroke-linecap="round"/><path d="M566.1 531.0 Q570.5 531.0 573.4 527.7" stroke="#e0623c" stroke-width="1.7" fill="none" stroke-linecap="round"/><path d="M567.4 535.1 Q571.7 536.1 575.3 533.5" stroke="#e0623c" stroke-width="1.7" fill="none" stroke-linecap="round"/><circle cx="578.7" cy="542.8" r="3.5" fill="#fcc548"/><circle cx="577.8" cy="542.1" r="1.5" fill="#fdd97c"/><circle cx="577.3" cy="549.4" r="3.5" fill="#fcc548"/><circle cx="576.5" cy="548.6" r="1.5" fill="#fdd97c"/><circle cx="574.6" cy="555.5" r="3.5" fill="#fcc548"/><circle cx="573.8" cy="554.6" r="1.5" fill="#fdd97c"/><circle cx="570.7" cy="560.9" r="3.5" fill="#fcc548"/><circle cx="569.9" cy="559.9" r="1.5" fill="#fdd97c"/><circle cx="565.7" cy="565.4" r="3.5" fill="#fcc548"/><circle cx="565.0" cy="564.4" r="1.5" fill="#fdd97c"/><circle cx="559.9" cy="568.7" r="3.5" fill="#fcc548"/><circle cx="559.3" cy="567.7" r="1.5" fill="#fdd97c"/><circle cx="553.6" cy="570.8" r="3.5" fill="#fcc548"/><circle cx="553.0" cy="569.7" r="1.5" fill="#fdd97c"/><circle cx="546.9" cy="571.5" r="3.5" fill="#fcc548"/><circle cx="546.4" cy="570.4" r="1.5" fill="#fdd97c"/><circle cx="540.2" cy="570.8" r="3.5" fill="#fcc548"/><circle cx="539.8" cy="569.7" r="1.5" fill="#fdd97c"/><circle cx="533.9" cy="568.7" r="3.5" fill="#fcc548"/><circle cx="533.5" cy="567.7" r="1.5" fill="#fdd97c"/><circle cx="528.1" cy="565.4" r="3.5" fill="#fcc548"/><circle cx="527.8" cy="564.4" r="1.5" fill="#fdd97c"/><circle cx="523.1" cy="560.9" r="3.5" fill="#fcc548"/><circle cx="522.9" cy="559.9" r="1.5" fill="#fdd97c"/><circle cx="519.2" cy="555.5" r="3.5" fill="#fcc548"/><circle cx="519.0" cy="554.6" r="1.5" fill="#fdd97c"/><circle cx="516.5" cy="549.4" r="3.5" fill="#fcc548"/><circle cx="516.3" cy="548.6" r="1.5" fill="#fdd97c"/><circle cx="515.1" cy="542.8" r="3.5" fill="#fcc548"/><circle cx="515.0" cy="542.1" r="1.5" fill="#fdd97c"/><circle cx="515.1" cy="536.2" r="3.5" fill="#fcc548"/><circle cx="515.0" cy="535.5" r="1.5" fill="#fdd97c"/><circle cx="516.5" cy="529.6" r="3.5" fill="#fcc548"/><circle cx="516.3" cy="529.0" r="1.5" fill="#fdd97c"/><circle cx="519.2" cy="523.5" r="3.5" fill="#fcc548"/><circle cx="519.0" cy="523.0" r="1.5" fill="#fdd97c"/><circle cx="523.1" cy="518.1" r="3.5" fill="#fcc548"/><circle cx="522.9" cy="517.7" r="1.5" fill="#fdd97c"/><circle cx="528.1" cy="513.6" r="3.5" fill="#fcc548"/><circle cx="527.8" cy="513.2" r="1.5" fill="#fdd97c"/><circle cx="533.9" cy="510.3" r="3.5" fill="#fcc548"/><circle cx="533.5" cy="509.9" r="1.5" fill="#fdd97c"/><circle cx="540.2" cy="508.2" r="3.5" fill="#fcc548"/><circle cx="539.8" cy="507.9" r="1.5" fill="#fdd97c"/><circle cx="546.9" cy="507.5" r="3.5" fill="#fcc548"/><circle cx="546.4" cy="507.2" r="1.5" fill="#fdd97c"/><circle cx="553.6" cy="508.2" r="3.5" fill="#fcc548"/><circle cx="553.0" cy="507.9" r="1.5" fill="#fdd97c"/><circle cx="559.9" cy="510.3" r="3.5" fill="#fcc548"/><circle cx="559.3" cy="509.9" r="1.5" fill="#fdd97c"/><circle cx="565.7" cy="513.6" r="3.5" fill="#fcc548"/><circle cx="565.0" cy="513.2" r="1.5" fill="#fdd97c"/><circle cx="570.7" cy="518.1" r="3.5" fill="#fcc548"/><circle cx="569.9" cy="517.7" r="1.5" fill="#fdd97c"/><circle cx="574.6" cy="523.5" r="3.5" fill="#fcc548"/><circle cx="573.8" cy="523.0" r="1.5" fill="#fdd97c"/><circle cx="577.3" cy="529.6" r="3.5" fill="#fcc548"/><circle cx="576.5" cy="529.0" r="1.5" fill="#fdd97c"/><circle cx="578.7" cy="536.2" r="3.5" fill="#fcc548"/><circle cx="577.8" cy="535.5" r="1.5" fill="#fdd97c"/><path d="M341.5 622.7 L360.5 599.7 A9 9 0 0 0 346.7 588.3 L327.7 611.3 Z" fill="url(#cyl)" stroke="#86d276" stroke-width="0.9"/><path d="M359.6 622.7 L378.6 599.7 A9 9 0 0 0 364.8 588.3 L345.8 611.3 Z" fill="url(#cyl)" stroke="#86d276" stroke-width="0.9"/><path d="M333.6 638.0 L352.6 615.0 A9 9 0 0 0 338.8 603.6 L319.8 626.6 Z" fill="url(#cyl)" stroke="#86d276" stroke-width="0.9"/><path d="M351.4 638.0 L370.4 615.0 A9 9 0 0 0 356.6 603.6 L337.6 626.6 Z" fill="url(#cyl)" stroke="#86d276" stroke-width="0.9"/><path d="M369.3 638.0 L388.3 615.0 A9 9 0 0 0 374.5 603.6 L355.5 626.6 Z" fill="url(#cyl)" stroke="#86d276" stroke-width="0.9"/><path d="M343.3 653.3 L362.3 630.3 A9 9 0 0 0 348.5 618.9 L329.5 641.9 Z" fill="url(#cyl)" stroke="#86d276" stroke-width="0.9"/><path d="M360.9 653.3 L379.9 630.3 A9 9 0 0 0 366.1 618.9 L347.1 641.9 Z" fill="url(#cyl)" stroke="#86d276" stroke-width="0.9"/><circle cx="334.6" cy="617" r="9" fill="#e6f8de" stroke="#7fcc6e" stroke-width="1.3"/><circle cx="334.6" cy="617" r="4.8" fill="#e59bd8"/><circle cx="334.6" cy="617" r="1.6" fill="#d070c0"/><circle cx="352.7" cy="617" r="9" fill="#e6f8de" stroke="#7fcc6e" stroke-width="1.3"/><circle cx="352.7" cy="617" r="4.8" fill="#e59bd8"/><circle cx="352.7" cy="617" r="1.6" fill="#d070c0"/><circle cx="326.7" cy="632.3" r="9" fill="#e6f8de" stroke="#7fcc6e" stroke-width="1.3"/><circle cx="326.7" cy="632.3" r="4.8" fill="#e59bd8"/><circle cx="326.7" cy="632.3" r="1.6" fill="#d070c0"/><circle cx="344.5" cy="632.3" r="9" fill="#e6f8de" stroke="#7fcc6e" stroke-width="1.3"/><circle cx="344.5" cy="632.3" r="4.8" fill="#e59bd8"/><circle cx="344.5" cy="632.3" r="1.6" fill="#d070c0"/><circle cx="362.4" cy="632.3" r="9" fill="#e6f8de" stroke="#7fcc6e" stroke-width="1.3"/><circle cx="362.4" cy="632.3" r="4.8" fill="#e59bd8"/><circle cx="362.4" cy="632.3" r="1.6" fill="#d070c0"/><circle cx="336.4" cy="647.6" r="9" fill="#e6f8de" stroke="#7fcc6e" stroke-width="1.3"/><circle cx="336.4" cy="647.6" r="4.8" fill="#e59bd8"/><circle cx="336.4" cy="647.6" r="1.6" fill="#d070c0"/><circle cx="354" cy="647.6" r="9" fill="#e6f8de" stroke="#7fcc6e" stroke-width="1.3"/><circle cx="354" cy="647.6" r="4.8" fill="#e59bd8"/><circle cx="354" cy="647.6" r="1.6" fill="#d070c0"/><path d="M578.6 624.1 L577.5 627.1 L579.0 630.6 L576.5 633.2 L574.9 635.8 L575.5 639.7 L576.7 644.5 L573.8 646.8 L571.1 649.1 L566.1 648.3 L564.6 651.9 L560.9 651.7 L557.7 652.2 L554.6 652.5 L551.7 653.7 L548.6 658.9 L545.0 658.0 L541.5 657.3 L538.1 656.3 L536.5 651.2 L533.4 650.5 L529.4 650.5 L526.2 648.9 L523.1 647.0 L520.7 644.4 L523.6 638.6 L518.9 637.3 L517.2 634.3 L517.5 630.7 L519.2 627.2 L517.0 624.1 L519.8 621.1 L514.5 616.9 L515.9 613.5 L519.2 611.0 L522.3 608.9 L520.6 603.7 L524.6 602.5 L525.5 598.5 L528.5 596.4 L532.7 596.5 L535.9 595.6 L538.6 593.2 L542.1 593.5 L545.5 594.8 L548.6 593.7 L552.2 590.3 L554.5 596.1 L557.4 596.9 L561.9 594.2 L563.7 597.9 L567.4 598.2 L569.7 600.6 L571.4 603.6 L577.1 603.4 L574.3 609.3 L577.1 611.4 L576.9 614.9 L580.6 617.3 L578.7 620.9 L578.6 624.1Z" fill="none" stroke="#2f607a" stroke-width="2.2" stroke-linejoin="round" opacity="0.95"/><path d="M582.1 624.1 L579.0 627.3 L580.1 630.8 L581.5 634.8 L575.1 635.9 L573.5 638.5 L572.8 641.7 L573.6 646.6 L570.4 648.3 L566.2 648.3 L563.9 650.6 L560.6 651.1 L558.3 654.1 L554.5 652.1 L552.1 657.1 L548.6 658.7 L544.9 658.9 L541.6 656.8 L537.8 657.4 L537.0 650.1 L533.4 650.4 L528.0 652.5 L526.0 649.2 L525.4 645.0 L520.4 644.6 L520.3 640.4 L517.5 637.9 L519.7 633.5 L519.6 630.3 L517.4 627.4 L519.3 624.1 L517.8 620.9 L514.3 616.8 L519.5 614.6 L522.7 612.6 L523.8 609.8 L524.7 606.8 L523.5 601.5 L528.0 601.2 L530.8 599.6 L534.1 599.0 L534.3 592.0 L538.9 594.4 L542.4 595.0 L545.6 595.5 L548.6 595.4 L551.7 594.8 L555.5 591.8 L557.7 596.2 L560.2 598.0 L564.5 596.6 L566.3 599.8 L572.2 597.9 L570.3 604.6 L574.5 605.3 L577.8 607.2 L577.1 611.4 L582.1 613.2 L579.6 617.5 L578.4 621.0 L582.1 624.1Z" fill="none" stroke="#3a6f86" stroke-width="1.8" stroke-linejoin="round" opacity="0.95"/><path d="M577.2 624.1 L579.7 627.4 L578.0 630.3 L581.4 634.8 L579.8 638.0 L576.1 640.0 L571.7 640.9 L571.0 644.2 L568.7 646.4 L566.1 648.2 L563.6 650.0 L562.6 655.5 L557.7 652.0 L554.6 652.1 L552.2 658.7 L548.6 656.4 L544.9 659.1 L542.1 654.5 L537.9 657.0 L535.2 654.1 L531.7 653.4 L528.9 651.2 L527.3 647.7 L527.1 643.5 L524.5 641.6 L518.8 641.3 L517.0 638.2 L515.5 634.8 L518.6 630.5 L515.9 627.5 L514.7 624.1 L516.0 620.7 L515.3 617.0 L518.2 614.2 L518.6 610.7 L519.9 607.5 L524.2 606.4 L522.8 600.8 L525.2 598.1 L531.7 600.8 L531.1 593.7 L534.4 592.1 L538.4 592.7 L542.7 596.1 L545.0 589.7 L548.6 594.9 L552.3 589.2 L555.5 591.9 L557.5 596.8 L560.6 597.2 L565.0 595.7 L567.6 598.0 L571.0 599.2 L574.5 600.8 L572.7 606.6 L573.1 609.9 L580.4 610.0 L575.6 615.3 L582.3 616.9 L577.6 621.1 L577.2 624.1Z" fill="none" stroke="#27536c" stroke-width="1.6" stroke-linejoin="round" opacity="0.95"/><path d="M582.4 624.1 L582.9 627.7 L580.1 630.8 L581.4 634.7 L575.7 636.2 L577.2 640.6 L573.4 642.1 L574.3 647.2 L571.2 649.2 L567.2 649.7 L564.6 651.8 L560.2 650.1 L557.4 651.2 L555.3 655.9 L551.9 655.6 L548.6 658.5 L545.2 656.5 L542.5 652.7 L539.1 653.4 L534.9 654.9 L532.6 651.8 L531.9 647.1 L525.7 649.5 L523.3 646.9 L525.2 641.1 L520.8 640.2 L520.3 636.7 L516.4 634.5 L518.8 630.4 L518.8 627.2 L516.9 624.1 L513.7 620.4 L520.3 618.1 L520.9 615.1 L518.8 610.8 L518.7 606.9 L522.8 605.4 L525.3 603.1 L525.6 598.6 L528.8 596.8 L534.2 599.2 L534.6 592.6 L539.4 595.9 L542.3 594.3 L545.0 590.1 L548.6 592.8 L552.1 590.4 L554.7 595.3 L559.2 591.4 L560.6 597.1 L563.3 598.7 L567.3 598.4 L569.1 601.3 L572.4 602.6 L576.6 603.7 L577.4 607.5 L574.5 612.6 L577.6 614.7 L580.0 617.4 L580.1 620.8 L582.4 624.1Z" fill="none" stroke="#356880" stroke-width="1.5" stroke-linejoin="round" opacity="0.95"/><path d="M580.3 624.1 L577.3 627.1 L578.0 630.3 L581.2 634.7 L576.7 636.6 L577.8 640.9 L577.1 644.8 L572.9 646.0 L570.7 648.7 L567.7 650.4 L563.8 650.5 L562.7 655.8 L558.4 654.1 L555.8 658.0 L551.8 654.4 L548.6 658.5 L545.1 657.7 L541.8 656.0 L538.9 654.0 L536.7 650.9 L531.8 653.3 L530.5 649.0 L526.6 648.6 L526.9 643.7 L525.2 641.1 L523.2 638.8 L517.6 637.9 L520.5 633.2 L514.7 631.3 L517.9 627.3 L516.3 624.1 L518.0 620.9 L516.7 617.3 L521.1 615.2 L520.2 611.4 L518.4 606.7 L524.7 606.7 L524.2 602.1 L528.1 601.4 L530.7 599.5 L534.4 599.5 L537.0 598.1 L537.8 590.9 L541.5 590.7 L545.1 590.4 L548.6 590.1 L552.3 589.3 L554.7 595.3 L558.6 593.3 L561.5 595.1 L564.8 596.1 L569.1 595.9 L571.1 599.1 L574.7 600.6 L572.2 607.0 L577.1 607.7 L578.8 610.7 L580.5 613.7 L580.5 617.3 L582.5 620.5 L580.3 624.1Z" fill="none" stroke="#2a5a74" stroke-width="1.4" stroke-linejoin="round" opacity="0.95"/><path d="M583.4 624.1 L579.6 627.4 L580.4 630.9 L581.5 634.8 L579.0 637.6 L575.0 639.3 L572.8 641.7 L571.3 644.6 L570.5 648.4 L569.3 652.6 L565.9 654.1 L561.3 652.5 L558.2 653.7 L555.7 657.4 L551.8 654.2 L548.6 655.3 L545.6 652.3 L542.4 653.0 L538.7 654.6 L535.1 654.4 L532.3 652.3 L530.5 649.1 L525.2 650.1 L524.3 646.0 L524.8 641.4 L523.7 638.5 L516.5 638.4 L515.1 635.0 L514.6 631.3 L516.3 627.5 L518.1 624.1 L519.8 621.1 L519.2 617.8 L520.2 614.9 L516.8 609.9 L518.7 606.8 L521.3 604.3 L526.8 604.5 L528.5 601.8 L530.7 599.5 L531.1 593.8 L536.6 597.2 L538.1 591.9 L541.7 591.8 L545.2 592.1 L548.6 589.1 L551.8 594.1 L555.2 592.8 L557.7 596.1 L560.4 597.6 L562.9 599.4 L566.5 599.4 L568.1 602.4 L569.9 604.9 L577.1 603.4 L574.9 608.9 L580.1 610.1 L580.2 613.8 L581.3 617.2 L581.3 620.7 L583.4 624.1Z" fill="none" stroke="#3e7088" stroke-width="1.2" stroke-linejoin="round" opacity="0.95"/><circle cx="548.6" cy="624.1" r="30.3" fill="none" stroke="#33647e" stroke-width="6.5" opacity="0.9"/><circle cx="548.6" cy="624.1" r="26.3" fill="#bcd4cc"/><circle cx="548.6" cy="624.1" r="25" fill="url(#pgr)"/>
<g>
<!-- foot body -->
<path d="M41 575.200 C38.500 552 37 530 36.500 512 C35 503 34 494 34.600 487.500 C35.500 480 39 477.300 42.500 477.500 C46.500 477.800 49.500 481 51 486
C50 477 49.800 470 50.300 465 C51.500 457.500 56 454.300 60.800 454.500 C66 455 69.500 459 71 465
C70 457 70 450 70.700 445.200 C72 438 76 435.200 80.700 435.300 C86.500 435.600 90.500 440 91.700 446
C91 441 91.200 438 91.700 435.800 C93 428.500 98 425.200 103 425.200 C109 425.400 113 429 114.200 435
C114 426 120 420.300 131.100 420.500 C142 420.800 148.500 428 148.700 438.100 C149 446 149.300 452 149.900 456.900
C151 464 152.500 469 154.600 473.300 C159 479 161.800 483 162.800 487.300 C165 495 166 503 165.100 510.800
C163.500 521 159 528 155.700 534.200 C152.500 541 151 546 149.900 550.600 C148 559 147 567 146.400 575.200 Z" fill="url(#skin)" stroke="#f2a574" stroke-width="1.200"/>
<!-- yellowish texture -->
<ellipse cx="82" cy="516" rx="22" ry="27" fill="url(#ytx)"/>
<!-- toe creases -->
<path d="M114.700 434 C114.200 446 114.300 456 114.700 463.900 M91.800 444 C92.300 460 94 476 96 487.300 M71 463 C72 476 74 489 76 497.900 M51 485 C52.500 496 55.500 507 58.500 514.300" stroke="#eea06e" stroke-width="1.200" fill="none"/>
<path d="M99 452 H108 M99.500 456 H107.500 M77 462 H85.500 M77.500 466 H85 M56 479 H63.500 M56.500 483 H63" stroke="#f0a878" stroke-width="0.800" fill="none" opacity="0.800"/>
<!-- bones -->
<path d="M124.100 447.500 C126 455 127.600 460 127.600 463.900 C127.600 468 126 471 124.500 474 L142.500 474 C140 471 138.100 468 138.100 463.900 C138.100 460 141 455 142.800 447.500 Z" fill="#f6e8dc" opacity="0.900"/>
<path d="M125.300 521 C128 530 128.500 540 126 548 C124 554 121 558 119.400 562.300 L144 562.300 C143 558 141.500 554 140.500 548 C139 540 140 530 142.800 521 Z" fill="#f6e8dc" opacity="0.900"/>
<!-- nails -->
<rect x="121.700" y="430.600" width="21.100" height="16.800" rx="4.500" fill="#f1ded4" stroke="#ebbfb0" stroke-width="0.900"/>
<rect x="97.600" y="431" width="12.400" height="9.500" rx="3.800" fill="#ecc0b8" stroke="#e8a898" stroke-width="0.700"/>
<rect x="74.900" y="440.500" width="12.900" height="9.300" rx="3.800" fill="#ecc0b8" stroke="#e8a898" stroke-width="0.700"/>
<rect x="54.200" y="459.200" width="11.300" height="8.200" rx="3.500" fill="#ecc0b8" stroke="#e8a898" stroke-width="0.700"/>
<rect x="37.400" y="481.500" width="8.900" height="5.800" rx="2.800" fill="#ecc0b8" stroke="#e8a898" stroke-width="0.600"/>
<!-- inflammation -->
<ellipse cx="145" cy="504" rx="25" ry="40" fill="url(#infl)"/>
<circle cx="138.100" cy="497.900" r="24.500" fill="#f08c68" opacity="0.550"/>
<!-- bone inside circle -->
<path d="M127 474 C125 480 124 484 124.500 488 L143 488 C143 484 142 480 141 474 Z M126 510 C125.500 515 125.500 519 125.300 522 L142.800 522 C142.500 519 142 515 141 510Z" fill="#f8e4d8" opacity="0.550"/>
<!-- yellow deposit -->
<path d="M120.600 494 C121 490 124 488.500 128 489.500 C131.500 490.200 134 488.600 137 488.400 C142 488.200 146 491.500 150 493 C153.500 494.200 157 494 157.500 498 C158 502 157.500 505.500 155 507.300 C152 508.500 149.500 506 148 503 C145 498.500 140 497 134.500 497.800 C130 498.500 128 501.500 124.500 501 C121.500 500.300 120.200 497.500 120.600 494 Z" fill="#f7de64"/>
<circle cx="138.100" cy="497.900" r="25.800" fill="none" stroke="#151515" stroke-width="2.300"/>
</g>
<!-- purple circle with crystals -->
<circle cx="227.300" cy="474.300" r="38.300" fill="url(#pcir)"/>
<g stroke="#3b3d40" stroke-width="5.600" stroke-linecap="round" fill="none">
<path d="M214 452 L230 482"/><path d="M244 455 L226 486"/><path d="M207 468 L242 480"/><path d="M248 472 L214 486"/><path d="M226 451 L231 496"/><path d="M210 480 L236 464"/><path d="M238 477 L249 483"/><path d="M218 463 L208 457"/><path d="M231 488 L238 496"/><path d="M218 483 L215 492"/><path d="M236 458 L238 452"/>
</g>
<g stroke="#606265" stroke-width="1.300" stroke-linecap="round" fill="none"><path d="M215 454 L229 480"/><path d="M243 457 L228 483"/><path d="M210 469 L240 479"/><path d="M246 473 L217 485"/></g>
<!-- red arrows -->
<g stroke="#e8222b" stroke-width="2.200" fill="#e8222b">
<path d="M191.200 470.900 L153 489.300" fill="none"/>
<path d="M145.500 492.800 L157.500 482.400 L160.800 491.200 Z" stroke="none"/>
<path d="M129 588.500 L135.800 514" fill="none"/>
<path d="M136.800 503 L141.800 517.500 L130.400 516.500 Z" stroke="none"/>
</g>
</svg><span class="t" style="left:119.20px;top:323.85px;font-size:22.2px;color:#fff;font-weight:bold;transform:scaleX(1.0541);">GOUT</span>
<span class="t" style="left:66.80px;top:352.47px;font-size:22.4px;color:#fff;font-weight:bold;transform:scaleX(1.0594);">MANAGEMENT</span>
<span class="t" style="left:300.00px;top:341.19px;font-size:17.6px;color:#fff;font-style:italic;transform:scaleX(1.0228);">Treatment</span>
<span class="t" style="left:455.40px;top:332.47px;font-size:21.2px;color:#fff;font-weight:bold;transform:scaleX(0.9715);">ACTIVE AGENTS</span>
<span class="t" style="left:432.60px;top:448.47px;font-size:21.2px;color:#fff;font-weight:bold;transform:scaleX(0.9622);">NANOCARRIERS</span>
<span class="t" style="left:568.20px;top:391.67px;font-size:18.6px;color:#1f3546;font-style:italic;transform:scaleX(0.9516);">Encapsulation</span>
<span class="t" style="left:420.50px;top:515.17px;font-size:18.6px;color:#222;transform:scaleX(0.9969);">Vesicle/</span>
<span class="t" style="left:420.50px;top:536.77px;font-size:18.6px;color:#222;transform:scaleX(0.9613);">lamellar</span>
<span class="t" style="left:418.80px;top:558.37px;font-size:18.6px;color:#222;transform:scaleX(0.9691);">systems</span>
<span class="t" style="left:402.70px;top:607.87px;font-size:18.6px;color:#222;transform:scaleX(0.9724);">Nonlamellar</span>
<span class="t" style="left:418.00px;top:629.37px;font-size:18.6px;color:#222;transform:scaleX(0.9662);">systems</span>
<span class="t" style="left:603.70px;top:519.87px;font-size:18.6px;color:#222;transform:scaleX(0.9670);">Lipid-based</span>
<span class="t" style="left:596.40px;top:541.27px;font-size:18.6px;color:#222;transform:scaleX(0.9707);">nanoparticles</span>
<span class="t" style="left:610.00px;top:602.77px;font-size:18.6px;color:#222;transform:scaleX(0.9663);">Polymeric</span>
<span class="t" style="left:595.60px;top:624.57px;font-size:18.6px;color:#222;transform:scaleX(0.9725);">nanoparticles</span>
<span class="t" style="left:170.60px;top:516.66px;font-size:19.8px;color:#222;transform:scaleX(1.0533);">Monosodium</span>
<span class="t" style="left:173.50px;top:542.26px;font-size:19.8px;color:#222;transform:scaleX(1.0481);">urate (MSU)</span>
<span class="t" style="left:194.50px;top:568.26px;font-size:19.8px;color:#222;transform:scaleX(1.0580);">crystals</span>
<span class="t" style="left:81.60px;top:593.76px;font-size:19.8px;color:#222;transform:scaleX(1.0468);">Inflamed</span>
<span class="t" style="left:101.00px;top:619.36px;font-size:19.8px;color:#222;transform:scaleX(1.1288);">joint</span>
<span class="t" style="left:894.50px;top:305.58px;font-size:22.5px;color:#767676;transform:scaleX(0.9425);">Article Views</span>
<span class="t" style="left:1060.00px;top:305.58px;font-size:22.5px;color:#767676;transform:scaleX(0.9714);">Altmetric</span>
<span class="t" style="left:1208.40px;top:305.58px;font-size:22.5px;color:#767676;transform:scaleX(0.9436);">Citations</span>
<span class="t" style="left:920.00px;top:340.12px;font-size:40.7px;color:#2f5fbf;font-weight:bold;transform:scaleX(1.0411);">893</span>
<div class="a" style="left:1096.5px;top:362.6px;width:12px;height:5px;background:#2f5fbf"></div><span class="t" style="left:1238.60px;top:340.12px;font-size:40.7px;color:#2f5fbf;font-weight:bold;transform:scaleX(0.9896);">6</span>
<div class="a" style="left:1028px;top:300px;width:1px;height:87px;background:#d9dfe2"></div><div class="a" style="left:1176px;top:300px;width:1px;height:87px;background:#d9dfe2"></div><span class="t" style="left:947.00px;top:406.61px;font-size:25.4px;color:#2f5fbf;transform:scaleX(0.9650);-webkit-text-stroke:0.25px #2f5fbf;">Learn about these metrics</span>
<div class="a" style="left:853px;top:479px;width:470px;height:1px;background:#d9dcde"></div><span class="t" style="left:883.00px;top:521.01px;font-size:28px;color:#111;font-weight:bold;transform:scaleX(0.9398);">Recommended Articles</span>
<span class="t" style="left:883.00px;top:601.62px;font-size:25.6px;color:#333;transform:scaleX(0.9406);-webkit-text-stroke:0.7px #333;">Nanozyme-Based Therapy in Gout</span>
<span class="t" style="left:883.00px;top:640.62px;font-size:25.6px;color:#555;transform:scaleX(0.9446);-webkit-text-stroke:0.7px #555;">July 4, 2025 |</span>
<span class="t" style="left:1034.70px;top:640.62px;font-size:25.6px;color:#0039a6;font-style:italic;transform:scaleX(0.9464);-webkit-text-stroke:0.35px #0039a6;">ACS Applied Materials</span>
<span class="t" style="left:1277.50px;top:640.62px;font-size:25.6px;color:#666;transform:scaleX(0.6796);">...</span>
<span class="t" style="left:883.00px;top:682.91px;font-size:20.4px;color:#444;transform:scaleX(0.9932);">Shiying Huang, Peng Yang, Yuming Yuan,</span>
<span class="t" style="left:1267.50px;top:682.91px;font-size:20.4px;color:#444;font-weight:bold;transform:scaleX(0.8234);">...</span>
<span class="t" style="left:1073.00px;top:651.18px;font-size:20px;color:rgba(140,140,140,0.62);transform:scaleX(0.9916);">Activate Windows</span>
<span class="t" style="left:1073.00px;top:675.98px;font-size:15px;color:rgba(140,140,140,0.62);transform:scaleX(0.9954);">Go to Settings to activate Windows.</span>
<div class="a" style="left:0;top:140px;width:1351px;height:139px;background:#fff;box-shadow:0 3px 10px rgba(0,0,0,0.27)"></div><div class="a" style="left:0;top:87px;width:1351px;height:53px;background:#0039a6"></div><div class="a" style="left:0;top:86px;width:1366px;height:1px;background:#d3e0f7"></div><span class="t" style="left:28.30px;top:100.56px;font-size:21px;color:#fff;transform:scaleX(0.9125);-webkit-text-stroke:0.4px #fff;">ACS</span>
<span class="t" style="left:108.00px;top:100.56px;font-size:21px;color:#fff;transform:scaleX(0.9843);-webkit-text-stroke:0.4px #fff;">ACS Publications</span>
<span class="t" style="left:308.80px;top:100.56px;font-size:21px;color:#fff;transform:scaleX(0.8998);-webkit-text-stroke:0.4px #fff;">C&amp;EN</span>
<span class="t" style="left:402.70px;top:100.56px;font-size:21px;color:#fff;transform:scaleX(0.9055);-webkit-text-stroke:0.4px #fff;">CAS</span>
<div class="a" style="left:108px;top:133px;width:160px;height:7px;background:#fbc72e"></div><span class="t" style="left:975.00px;top:100.56px;font-size:21px;color:#fff;transform:scaleX(1.0197);-webkit-text-stroke:0.4px #fff;">Access through institution</span>
<div class="a" style="left:1239px;top:102px;width:1.5px;height:21px;background:#8aa0d4"></div><span class="t" style="left:1266.00px;top:100.56px;font-size:21px;color:#fff;transform:scaleX(0.9677);-webkit-text-stroke:0.4px #fff;">Log In</span>
<svg style="left:0;top:0" width="400" height="260" viewBox="0 0 400 260">
<!-- blue lower triangle -->
<path d="M28.6 206.6 L90.9 206.6 L59.6 237.8 Z" fill="#0c52a3"/>
<!-- eagle / yellow upper -->
<path d="M29.6 205.6 L49 187.2 Q52 184.2 55.2 186 L56.6 187.2 Q55.6 183 57.2 180.4 Q58.6 178.6 61 179.6 Q64 180.6 66 182.6 Q63.6 182.6 62.6 183.8 Q62.4 186 63.4 187.6 Q66.4 184 69.6 186.4 L90 205.6 Z" fill="#fcc73d"/>
<!-- feather lines (white) -->
<g stroke="#fff" stroke-width="0.55" fill="none" opacity="0.85">
<path d="M36 204 L50 191"/><path d="M39.5 204.5 L52 193"/><path d="M43 205 L54 195"/><path d="M46.5 205.2 L55.5 197.5"/>
<path d="M83.5 204 L69.5 191"/><path d="M80 204.5 L67.5 193"/><path d="M76.500 205 L65.5 195"/><path d="M73 205.2 L64 197.500"/>
<path d="M52 201 Q55 196 57 199 Q59 194 61 199 Q63 196 66 201" stroke-width="0.7"/>
<path d="M50 204 Q54 200 57 203 Q60 199 62 203 Q65 200 69 204" stroke-width="0.7"/>
</g>
<path d="M47 205.8 L72 205.8 L72 203.5 L47 203.5Z" fill="#fcc73d"/>
<path d="M28.6 205.3 L90.9 205.3" stroke="#fff" stroke-width="0.0"/>
<!-- letters -->
<g font-family="Liberation Sans" font-weight="bold" fill="#fcc73d" font-size="8" text-anchor="middle">
<text x="46.9" y="217.3">A</text><text x="72.3" y="217.3">C</text><text x="59.4" y="230.8">S</text></g>
<g stroke="#fcc73d" fill="none" stroke-width="1.3">
<path d="M59.5 210.6 L54.6 221.4 L64.4 221.4 Z"/><path d="M56 209.8 L63 209.8" stroke-width="0.9"/>
<path d="M57.6 209.8 L59.5 213 L61.4 209.8" stroke-width="0.7"/>
</g>
<circle cx="54.6" cy="221.4" r="1" fill="#fcc73d"/><circle cx="64.4" cy="221.4" r="1" fill="#fcc73d"/><circle cx="59.5" cy="221.6" r="0.9" fill="#fcc73d"/>
</svg><span class="t" style="left:100.60px;top:173.83px;font-size:39.6px;color:#0c52a3;font-weight:bold;transform:scaleX(0.7822);">ACS</span>
<span class="t" style="left:171.60px;top:173.83px;font-size:39.6px;color:#0c52a3;transform:scaleX(0.9966);-webkit-text-stroke:0.4px #fff;">Publications</span>
<span class="t" style="left:100.80px;top:216.77px;font-size:18.6px;color:#0c52a3;transform:scaleX(0.9104);-webkit-text-stroke:0.25px #0c52a3;">Most Trusted. Most Cited. Most Read.</span>
<div class="a" style="left:604px;top:167px;width:491px;height:82px;border:1px solid #747474;border-radius:4px;background:#fff"></div><span class="t" style="left:633.00px;top:194.61px;font-size:25.4px;color:#545454;transform:scaleX(0.9294);">Search text, DOI, authors, etc.</span>
<svg style="left:1047.5px;top:191.7px" width="38" height="36" viewBox="0 0 38 36"><circle cx="15" cy="15" r="10.2" fill="none" stroke="#0039a6" stroke-width="2.9"/><path d="M23 23 L30.5 29.8" stroke="#0039a6" stroke-width="2.3" stroke-linecap="round"/></svg><span class="t" style="left:1118.50px;top:182.03px;font-size:20.6px;color:#0039a6;transform:scaleX(1.0096);text-decoration:underline;text-decoration-thickness:1.5px;text-underline-offset:2px;">Advanced</span>
<span class="t" style="left:1118.50px;top:210.03px;font-size:20.6px;color:#0039a6;transform:scaleX(0.9805);text-decoration:underline;text-decoration-thickness:1.5px;text-underline-offset:2px;">Search</span>
<div class="a" style="left:1281px;top:199.15px;width:28px;height:3.7px;border-radius:1.8px;background:#2e2e2e"></div><div class="a" style="left:1281px;top:207.95px;width:28px;height:3.7px;border-radius:1.8px;background:#2e2e2e"></div><div class="a" style="left:1281px;top:216.65px;width:28px;height:3.7px;border-radius:1.8px;background:#2e2e2e"></div><div class="a" style="left:1351px;top:87px;width:15px;height:641px;background:#fafafa"></div><div class="a" style="left:1354px;top:176px;width:9px;height:42px;border-radius:4.5px;background:#8b8b8b"></div><svg style="left:1353px;top:92px" width="11" height="8" viewBox="0 0 11 8"><path d="M0.5 6.5 L5.5 1 L10.5 6.5Z" fill="#8b8b8b"/></svg><svg style="left:1353px;top:714px" width="11" height="8" viewBox="0 0 11 8"><path d="M0.5 1 L5.5 6.5 L10.5 1Z" fill="#6f6f6f"/></svg><div class="a" style="left:0;top:728px;width:1366px;height:40px;background:linear-gradient(90deg,#1f3540 0%,#1f3440 45%,#192b3d 70%,#15243a 100%)"></div><svg style="left:15.500px;top:739.500px" width="17" height="17" viewBox="0 0 17 17"><path d="M0 2.400 L7.200 1.400 V8 H0 Z M8 1.300 L17 0 V8 H8 Z M0 8.800 H7.200 V15.500 L0 14.500 Z M8 8.800 H17 V17 L8 15.700 Z" fill="#fff"/></svg><div class="a" style="left:48px;top:728px;width:288px;height:40px;background:#f2f2f2;border-top:1px solid #d9d9d9;box-sizing:border-box"></div><svg style="left:58px;top:738px" width="20" height="20" viewBox="0 0 20 20"><circle cx="12.400" cy="7.800" r="5" fill="none" stroke="#222" stroke-width="1.300"/><path d="M8.800 11.400 L2.400 17.800" stroke="#222" stroke-width="1.400"/></svg><span class="t" style="left:89.00px;top:739.90px;font-size:15.2px;color:#2b2b2b;transform:scaleX(0.9401);">Type here to search</span>
<svg style="left:256px;top:729px" width="80" height="39" viewBox="256 729 80 39">
<defs><linearGradient id="rk" x1="0" y1="0" x2="1" y2="0"><stop offset="0" stop-color="#a39488"/><stop offset="0.35" stop-color="#7c7488"/><stop offset="1" stop-color="#2a2c48"/></linearGradient>
<linearGradient id="rk2" x1="0" y1="0" x2="1" y2="1"><stop offset="0" stop-color="#8a86a0"/><stop offset="1" stop-color="#3a3a5c"/></linearGradient>
<linearGradient id="rk3" x1="0" y1="0" x2="0.3" y2="1"><stop offset="0" stop-color="#1e2038"/><stop offset="1" stop-color="#3c3c5e"/></linearGradient>
<linearGradient id="ff" x1="0" y1="0" x2="0" y2="1"><stop offset="0" stop-color="#f8c51a"/><stop offset="0.5" stop-color="#fba714"/><stop offset="1" stop-color="#f9860f"/></linearGradient>
<linearGradient id="sn" x1="0" y1="0" x2="0" y2="1"><stop offset="0" stop-color="#ffa826"/><stop offset="1" stop-color="#ff7410"/></linearGradient>
<linearGradient id="tr" x1="0" y1="0" x2="0" y2="1"><stop offset="0" stop-color="#b0ae18"/><stop offset="0.5" stop-color="#6f9a1c"/><stop offset="1" stop-color="#3f7c1a"/></linearGradient></defs>
<circle cx="276.4" cy="756.7" r="6.7" fill="url(#sn)"/>
<path d="M270.5 768 L271 761 L277 757.5 L283 754.500 L288 768 Z" fill="#6c6c92"/>
<path d="M282.300 768 L283 744 L284.500 741.600 L291 740.200 L297 741.600 L303 744.500 L312 746.500 L318 743.400 L320 768 Z" fill="url(#rk)"/>
<path d="M297 741.800 L304 744.800 L312 746.800 L317 744 L313 750 L306 753 L300 768 L297.500 768 Z" fill="#272a46"/>
<path d="M318 743.400 L323 739.500 L329.200 737.800 L336 738.800 L336 768 L318 768 L322 758 L314 751 Z" fill="url(#rk3)"/>
<path d="M304 768 L307 760 L312 754.500 L317 755.500 L322 758 L327 764 L328 768 Z" fill="url(#rk2)"/>
<path d="M290.800 741.700 Q293 740.600 295.200 742.400 L295 752 L297.600 768 L288 768 L290 753 Z" fill="url(#ff)"/>
<path d="M264.600 746.400 L268.600 753 L267.200 753 L270 759 L268.400 759 L271.400 765 L269.600 765 L271 768 L258 768 L259.600 765 L257.900 765 L260.800 759 L259.300 759 L262 753 L260.700 753 Z" fill="url(#tr)"/>
</svg><svg style="left:0;top:0" width="400" height="768" viewBox="0 0 400 768"><g fill="none" stroke="#fff" stroke-width="1.150"><rect x="352.300" y="744.400" width="10.200" height="6.800"/><path d="M352.300 739.800 V742.400 H362.500 V739.800 M352.300 755.200 V753 H362.500 V755.200"/><path d="M366.600 739.800 V755.200" stroke-width="1.200"/></g><rect x="365.200" y="744.400" width="2.900" height="2.900" fill="#fff"/></svg><div class="a" style="left:485px;top:728px;width:48px;height:40px;background:#42555f"></div><div class="a" style="left:391px;top:766px;width:40px;height:2px;background:#80bdec"></div><div class="a" style="left:440px;top:766px;width:40px;height:2px;background:#80bdec"></div><div class="a" style="left:485px;top:766px;width:48px;height:2px;background:#80bdec"></div><div class="a" style="left:539px;top:766px;width:32px;height:2px;background:#80bdec"></div><div class="a" style="left:571px;top:766px;width:7px;height:2px;background:#56789a"></div><svg style="left:400px;top:738px" width="22" height="19" viewBox="0 0 22 19"><path d="M0.500 1.500 Q0.500 0.500 1.500 0.500 H7.500 L9.500 2.500 H20.500 Q21.500 2.500 21.500 3.500 V6 H0.500 Z" fill="#e8a92f"/><rect x="0.500" y="4" width="21" height="14.500" rx="0.800" fill="#fcd462"/><rect x="0.500" y="4" width="21" height="3" fill="#fbe08a"/><path d="M5.500 18.500 V11.500 H16.500 V18.500 H13.500 V14.500 H8.500 V18.500 Z" fill="#3d8fe0"/><rect x="5.500" y="11.500" width="11" height="2.200" fill="#2f7ad0"/></svg><svg style="left:447.300px;top:735.700px" width="25" height="25" viewBox="0 0 25 25"><defs>
<linearGradient id="eg1" x1="0" y1="0" x2="0.300" y2="1"><stop offset="0" stop-color="#2aa9ec"/><stop offset="0.600" stop-color="#1a7fd4"/><stop offset="1" stop-color="#0d57a8"/></linearGradient>
<linearGradient id="eg2" x1="0" y1="0.300" x2="1" y2="0.300"><stop offset="0" stop-color="#2fb7d8"/><stop offset="0.450" stop-color="#3ccf86"/><stop offset="1" stop-color="#6fdc4c"/></linearGradient>
<linearGradient id="eg3" x1="0" y1="0" x2="1" y2="1"><stop offset="0" stop-color="#1464b8"/><stop offset="1" stop-color="#0b3f8c"/></linearGradient></defs>
<circle cx="12.500" cy="12.500" r="12.200" fill="url(#eg1)"/>
<path d="M3.200 5 C6 1.200 10.500 -0.300 15 0.600 C21 1.800 24.900 7 24.600 13 C24.500 16 22.500 18.300 19.500 18.300 C16.500 18.300 14.800 16.500 15.200 14.500 C15.600 13 17 12.500 17.200 11 C17.400 8 14.500 5.600 11 5.600 C8 5.600 5.200 7 3.200 9.500 C2.500 8 2.600 6.300 3.200 5 Z" fill="url(#eg2)"/>
<path d="M6.500 13.500 C6.300 18.500 10 23 15.500 23.300 C18.500 23.400 21 22.300 22.800 20.300 C20 22 16 21.300 13.800 19 C11.500 16.500 11.500 13 13.800 11 C11.500 9.300 6.800 9.800 6.500 13.500 Z" fill="url(#eg3)"/>
<path d="M15.300 14.300 C14.900 16.600 16.800 18.400 19.600 18.300 C22 18.200 24 16.600 24.500 14 C24.700 13 24.700 12 24.500 11.300 L17.200 11.200 C17 12.600 15.700 13.100 15.300 14.300 Z" fill="#1f3540"/>
</svg><svg style="left:496.300px;top:735.500px" width="25" height="25" viewBox="0 0 48 48"><circle cx="24" cy="24" r="23" fill="#fff"/>
<path d="M24 1 A23 23 0 0 1 43.920 12.500 L24 12.500 A11.500 11.500 0 0 0 14.040 18.250 L4.080 12.500 A23 23 0 0 1 24 1Z" fill="#ea4335"/>
<path d="M43.920 12.500 A23 23 0 0 1 24 47 L33.960 29.750 A11.500 11.500 0 0 0 33.960 18.250 L24 12.500 Z" fill="#fbbc04"/>
<path d="M4.080 12.500 L14.040 29.750 A11.500 11.500 0 0 0 24 35.500 L33.960 29.750 L24 47 A23 23 0 0 1 4.080 12.500Z" fill="#34a853"/>
<path d="M33.960 18.250 L43.920 12.500 L24 12.500 Z" fill="#ea4335"/>
<circle cx="24" cy="24" r="10.500" fill="#fff"/><circle cx="24" cy="24" r="8.300" fill="#4285f4"/></svg><svg style="left:545px;top:736px" width="26" height="24" viewBox="0 0 26 24"><path d="M6 1 H20 L24 5 V22 H6 Z" fill="#fff"/><path d="M20 1 L24 5 H20 Z" fill="#c8d4e6"/><rect x="1" y="3.500" width="17" height="16" fill="#fdfdff" stroke="#9db4d6" stroke-width="0.600"/>
<text x="9.500" y="16.800" font-family="Liberation Sans" font-weight="bold" font-size="16.500" fill="#1b4ea6" text-anchor="middle" transform="scale(1.050 1)" >W</text>
<path d="M18 14 L25 12 L25.500 19 L19 21.500 Z" fill="#e8ecf2" stroke="#b8c2d0" stroke-width="0.500"/><path d="M19 8 H23 M19 10.500 H23" stroke="#9fb2cc" stroke-width="0.800"/></svg><svg style="left:594px;top:735px" width="26" height="26" viewBox="0 0 26 26"><defs><radialGradient id="fx1" cx="0.650" cy="0.250" r="0.900"><stop offset="0" stop-color="#ffe14a"/><stop offset="0.350" stop-color="#ff9a1f"/><stop offset="0.700" stop-color="#ff3d3d"/><stop offset="1" stop-color="#d9166f"/></radialGradient><radialGradient id="fx2" cx="0.500" cy="0.400" r="0.600"><stop offset="0" stop-color="#9a5cf5"/><stop offset="1" stop-color="#5b2bc4"/></radialGradient></defs>
<path d="M13 2.500 C15 0.500 18 0.500 19.500 0 C19 2 20.500 3.500 22 5.500 C24.500 8.500 25.500 12 25 15.500 C24 21.500 19 25.800 13 25.800 C6.500 25.800 1 20.500 1 14 C1 11 2 8.500 3.500 6.500 C3.500 7.500 4 8.500 4.500 9 C5 6.500 6.500 4.500 8.500 3.500 C8.300 4.500 8.500 5.500 9 6 C10 4.500 11.500 3.200 13 2.500 Z" fill="url(#fx1)"/>
<circle cx="13.200" cy="14.500" r="7" fill="url(#fx2)"/>
<path d="M6 11.500 C8 8.500 12 8.500 14 10 C12 10 10.500 11 10.500 12.500 C10.500 14 12 15 14 15 C12 17.500 8 17 6.500 15 C5.800 13.800 5.700 12.500 6 11.500 Z" fill="#ff8a1c"/>
<path d="M6 11.500 C7 10 9 9.500 10 9.500 C8.500 8 8.300 6.500 9 6 C6.500 7 5.500 9.500 6 11.500Z" fill="#ffb52e"/>
</svg><svg style="left:890px;top:739px" width="25" height="18" viewBox="0 0 25 18"><path d="M0.700 3.500 L5.500 1 L11 7 L14.500 3.500 L20 9.500 L20 3 L24.500 3 L24.500 17 L10.500 17 L10.500 12.500 L16.500 12.500 L14.200 9.800 L10.800 13 L5 6.500 L3 7.500 Z" fill="#e9542b"/></svg><span class="t" style="left:922.70px;top:739.53px;font-size:15.6px;color:#fff;transform:scaleX(0.7664);">RELIANCE</span>
<span class="t" style="left:992.80px;top:739.53px;font-size:15.6px;color:#ea6060;transform:scaleX(0.8416);">-1.69%</span>
<svg style="left:1062px;top:743px" width="15" height="10" viewBox="0 0 15 10"><path d="M1.300 8.800 L7.500 2.600 L13.700 8.800" fill="none" stroke="#fff" stroke-width="1.500"/></svg><svg style="left:1092px;top:739px" width="18" height="18" viewBox="0 0 18 18"><g fill="none" stroke="#fff" stroke-width="1.200"><rect x="3.500" y="5" width="8.500" height="8" rx="1.800"/><path d="M12 7.800 L14.800 6 V12 L12 10.200"/><path d="M4 2.800 Q9 -0.500 14 2.800 M4 15.200 Q9 18.500 14 15.200"/></g></svg><svg style="left:1124px;top:741px" width="19" height="14" viewBox="0 0 19 14"><rect x="5.500" y="3.500" width="11.500" height="8.500" fill="none" stroke="#fff" stroke-width="1.200"/><rect x="17" y="6" width="1.600" height="3.500" fill="#fff"/><rect x="7.200" y="5.200" width="8" height="5" fill="#fff"/><path d="M0.500 4.500 H5.500 M1.800 2 V4.500 M4.200 2 V4.500 M1 4.500 Q1 8 3 8 Q5 8 5 4.500" stroke="#fff" stroke-width="1.100" fill="none"/></svg><svg style="left:1158px;top:740px" width="16" height="16" viewBox="0 0 16 16"><g fill="none" stroke="#fff" stroke-width="1.300"><path d="M1.500 14.500 A13 13 0 0 1 14.500 1.500" opacity="0.550"/><path d="M5 14.500 A9.500 9.500 0 0 1 14.500 5"/><path d="M8.500 14.500 A6 6 0 0 1 14.500 8.500"/></g><circle cx="13.200" cy="13.400" r="1.500" fill="#fff"/></svg><svg style="left:1188px;top:740px" width="18" height="16" viewBox="0 0 18 16"><path d="M1 5.500 H4 L8 1.800 V14.200 L4 10.500 H1 Z" fill="none" stroke="#fff" stroke-width="1.200" stroke-linejoin="round"/><g fill="none" stroke="#fff" stroke-width="1.100"><path d="M10.300 5.500 Q11.800 8 10.300 10.500"/><path d="M12.500 3.800 Q15 8 12.500 12.200" opacity="0.850"/><path d="M14.800 2.200 Q18.200 8 14.800 13.800" opacity="0.500"/></g></svg><span class="t" style="left:1219.00px;top:731.67px;font-size:12.3px;color:#fff;transform:scaleX(0.8592);">ENG</span>
<span class="t" style="left:1225.00px;top:748.97px;font-size:12.3px;color:#fff;transform:scaleX(0.9675);">IN</span>
<span class="t" style="left:1260.00px;top:731.67px;font-size:12.3px;color:#fff;transform:scaleX(0.9256);">2:06 PM</span>
<span class="t" style="left:1254.70px;top:748.97px;font-size:12.3px;color:#fff;transform:scaleX(0.9558);">2/19/2026</span>
<svg style="left:1325px;top:739.500px" width="17" height="16" viewBox="0 0 17 16"><path d="M0.500 0.500 H16.500 V11.500 H5.500 L0.500 15.500 Z" fill="#fff"/><path d="M3.500 3.800 H13.500 M3.500 6.300 H13.500 M3.500 8.800 H10" stroke="#1a2a3c" stroke-width="1"/></svg><div class="a" style="left:1332.900px;top:746.900px;width:15.500px;height:15.500px;border-radius:8px;background:#2b2b2b;border:1px solid #777;box-sizing:border-box"></div><span class="t" style="left:1337.70px;top:748.85px;font-size:10.8px;color:#fff;font-weight:bold;transform:scaleX(0.9989);">5</span>
<div class="a" style="left:1361px;top:728px;width:1px;height:40px;background:#56667a"></div>
</body></html>
